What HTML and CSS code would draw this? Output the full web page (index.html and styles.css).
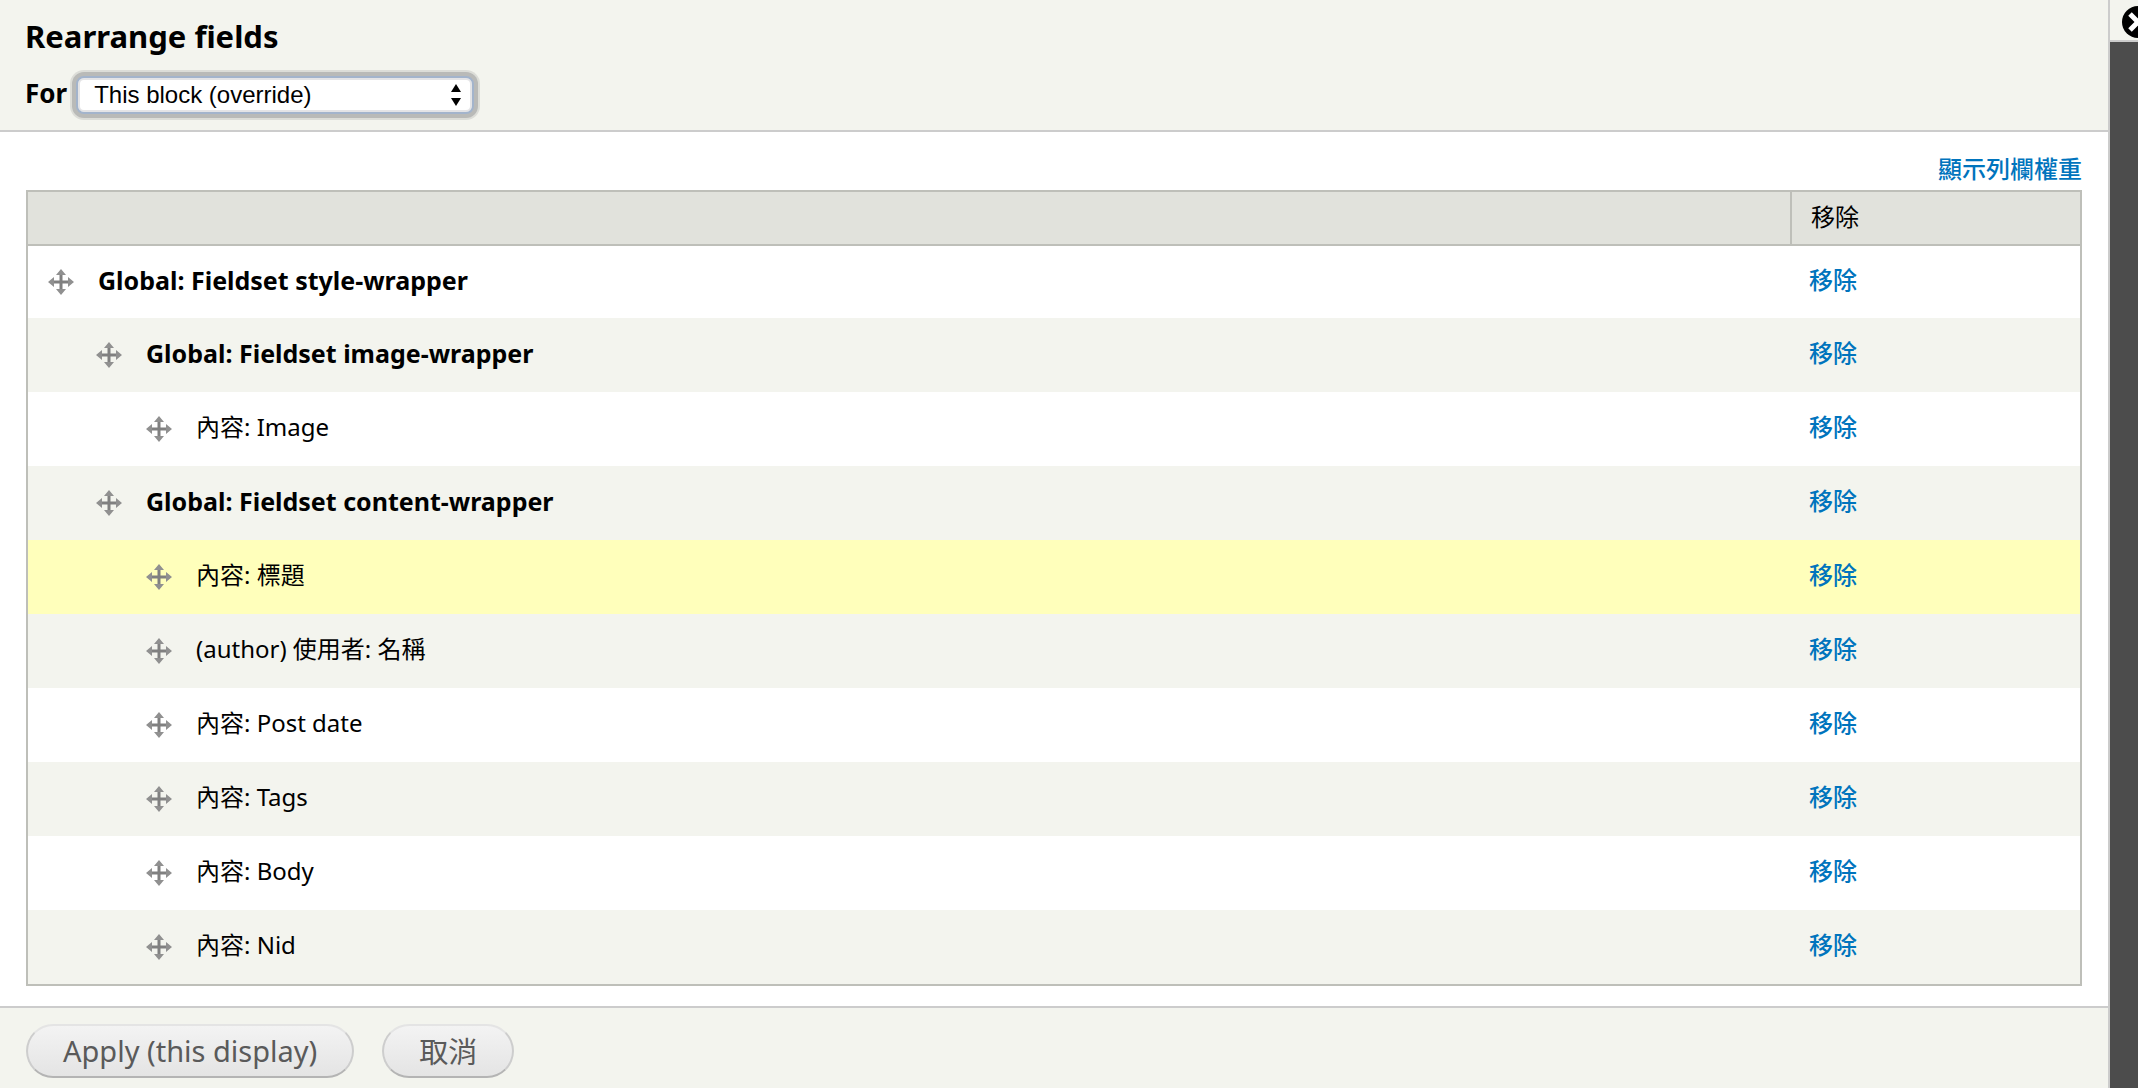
FILE: index.html
```html
<!DOCTYPE html>
<html lang="zh-Hant">
<head>
	<meta charset="UTF-8">
	<title>Rearrange fields</title>
	<link rel="stylesheet" href="styles.css">
</head>
<body>
	<svg class="defs" width="0" height="0" aria-hidden="true">
		<symbol id="move" viewBox="0 0 26 26">
			<path d="M13 3v20M3 13h20" stroke="#808080" stroke-width="3" fill="none"/>
			<path d="M13 0l5 6h-10zM13 26l5-6h-10zM0 13l6-5v10zM26 13l-6-5v10z" fill="#909090"/>
		</symbol>
	</svg>
	<div class="dialog">
		<header class="dialog-title">
			<h1>Rearrange fields</h1>
			<div class="override">
				<label for="display">For</label>
				<span class="select-wrap">
					<select id="display">
						<option>This block (override)</option>
					</select>
					<svg class="arrows" viewBox="0 0 10 22" aria-hidden="true"><path d="M5 0l5 8H0zM5 22l5-8H0z"/></svg>
				</span>
			</div>
		</header>
		<main class="content">
			<a class="weights" href="#">顯示列欄權重</a>
			<table>
				<thead>
					<tr><th></th><th class="remove">移除</th></tr>
				</thead>
				<tbody>
					<tr>
						<td><div class="field group"><svg class="handle"><use href="#move"/></svg>Global: Fieldset style-wrapper</div></td>
						<td class="remove"><a href="#">移除</a></td>
					</tr>
					<tr>
						<td><div class="field group level1"><svg class="handle"><use href="#move"/></svg>Global: Fieldset image-wrapper</div></td>
						<td class="remove"><a href="#">移除</a></td>
					</tr>
					<tr>
						<td><div class="field level2"><svg class="handle"><use href="#move"/></svg>內容: Image</div></td>
						<td class="remove"><a href="#">移除</a></td>
					</tr>
					<tr>
						<td><div class="field group level1"><svg class="handle"><use href="#move"/></svg>Global: Fieldset content-wrapper</div></td>
						<td class="remove"><a href="#">移除</a></td>
					</tr>
					<tr class="drag">
						<td><div class="field level2"><svg class="handle"><use href="#move"/></svg>內容: 標題</div></td>
						<td class="remove"><a href="#">移除</a></td>
					</tr>
					<tr>
						<td><div class="field level2"><svg class="handle"><use href="#move"/></svg>(author) 使用者: 名稱</div></td>
						<td class="remove"><a href="#">移除</a></td>
					</tr>
					<tr>
						<td><div class="field level2"><svg class="handle"><use href="#move"/></svg>內容: Post date</div></td>
						<td class="remove"><a href="#">移除</a></td>
					</tr>
					<tr>
						<td><div class="field level2"><svg class="handle"><use href="#move"/></svg>內容: Tags</div></td>
						<td class="remove"><a href="#">移除</a></td>
					</tr>
					<tr>
						<td><div class="field level2"><svg class="handle"><use href="#move"/></svg>內容: Body</div></td>
						<td class="remove"><a href="#">移除</a></td>
					</tr>
					<tr>
						<td><div class="field level2"><svg class="handle"><use href="#move"/></svg>內容: Nid</div></td>
						<td class="remove"><a href="#">移除</a></td>
					</tr>
				</tbody>
			</table>
		</main>
		<footer class="buttons">
			<button type="submit">Apply (this display)</button>
			<button type="button">取消</button>
		</footer>
	</div>
	<div class="side">
		<button class="close" type="button" aria-label="Close">
			<svg viewBox="0 0 32 32"><circle cx="16" cy="16" r="16"/><path d="M8 8l16 16M24 8L8 24" stroke="#fff" stroke-width="5"/></svg>
		</button>
	</div>
</body>
</html>
```

FILE: styles.css
```css
*{
	box-sizing: border-box;
}
body{
	margin: 0;
	min-height: 100vh;
	display: flex;
	overflow-x: hidden;
	background: #4c4c4c;
	color: #000;
	font: 24px/36px "Noto Sans","Noto Sans CJK TC",sans-serif;
}
.defs{
	position: absolute;
}
a{
	color: #0074bd;
	font-weight: 500;
	text-decoration: none;
}
.dialog{
	flex: 1;
	display: flex;
	flex-direction: column;
	background: #fff;
	border-right: 2px solid #ccc;
}
.dialog-title{
	padding: 18px 25px 10px;
	background: #f3f4ee;
	border-bottom: 2px solid #ccc;
}
h1{
	margin: 0 0 16px;
	font-size: 31px;
	line-height: 36px;
}
.override{
	display: flex;
	align-items: center;
	gap: 9px;
	height: 50px;
}
.override label{
	padding-bottom: 4px;
	font-size: 26px;
	font-weight: bold;
}
.select-wrap{
	position: relative;
	display: flex;
}
select{
	appearance: none;
	width: 398px;
	height: 38px;
	padding: 0 16px 2px;
	border: 2px solid #a3b4cc;
	border-radius: 8px;
	background: #fff;
	box-shadow: 0 0 0 4px #b9bab8, 0 0 0 6px #dcddd8, inset 0 0 0 2px #e4e4e6;
	color: #000;
	font: 24px "Liberation Sans",sans-serif;
}
.arrows{
	position: absolute;
	right: 13px;
	top: 8px;
	width: 10px;
	height: 22px;
	pointer-events: none;
}
.content{
	padding: 19px 26px 20px;
}
.weights{
	display: block;
	margin-bottom: 3px;
	text-align: right;
}
table{
	width: 100%;
	border: 2px solid #bebfb9;
	border-spacing: 0;
}
th{
	height: 54px;
	padding: 0 0 2px;
	background: #e1e2dc;
	border-bottom: 2px solid #bebfb9;
	font-weight: normal;
	text-align: left;
}
td{
	height: 74px;
	padding: 0 0 4px 20px;
}
tbody tr:first-child td{
	height: 72px;
}
tbody tr:nth-child(even){
	background: #f3f4ee;
}
tbody tr.drag{
	background: #ffffbb;
}
.remove{
	width: 290px;
	padding-left: 19px;
}
th.remove{
	border-left: 2px solid #bebfb9;
}
.field{
	display: flex;
	align-items: center;
	gap: 24px;
}
.group{
	font-size: 25px;
	font-weight: bold;
}
.level1{
	padding-left: 48px;
}
.level2{
	padding-left: 98px;
}
.handle{
	width: 26px;
	height: 26px;
	margin-top: 4px;
}
.buttons{
	flex: 1;
	display: flex;
	align-items: flex-start;
	gap: 28px;
	padding: 16px 26px 10px;
	background: #f3f4ee;
	border-top: 2px solid #ccc;
}
.buttons button{
	height: 54px;
	padding: 0 35px 2px;
	border: 2px solid #cdcdcd;
	border-top-color: #e4e4e4;
	border-bottom-color: #b4b4b4;
	border-radius: 27px;
	background: linear-gradient(#f3f3f3,#e4e4e4);
	color: #5a5a5a;
	font: 29px "Noto Sans","Noto Sans CJK TC",sans-serif;
}
.side{
	width: 28px;
	overflow: hidden;
}
.close{
	display: block;
	width: 56px;
	height: 42px;
	padding: 6px 12px 2px;
	border: 0;
	border-bottom: 2px solid #ccc;
	background: #f3f4ee;
}
.close svg{
	display: block;
	width: 32px;
	height: 32px;
}
```
